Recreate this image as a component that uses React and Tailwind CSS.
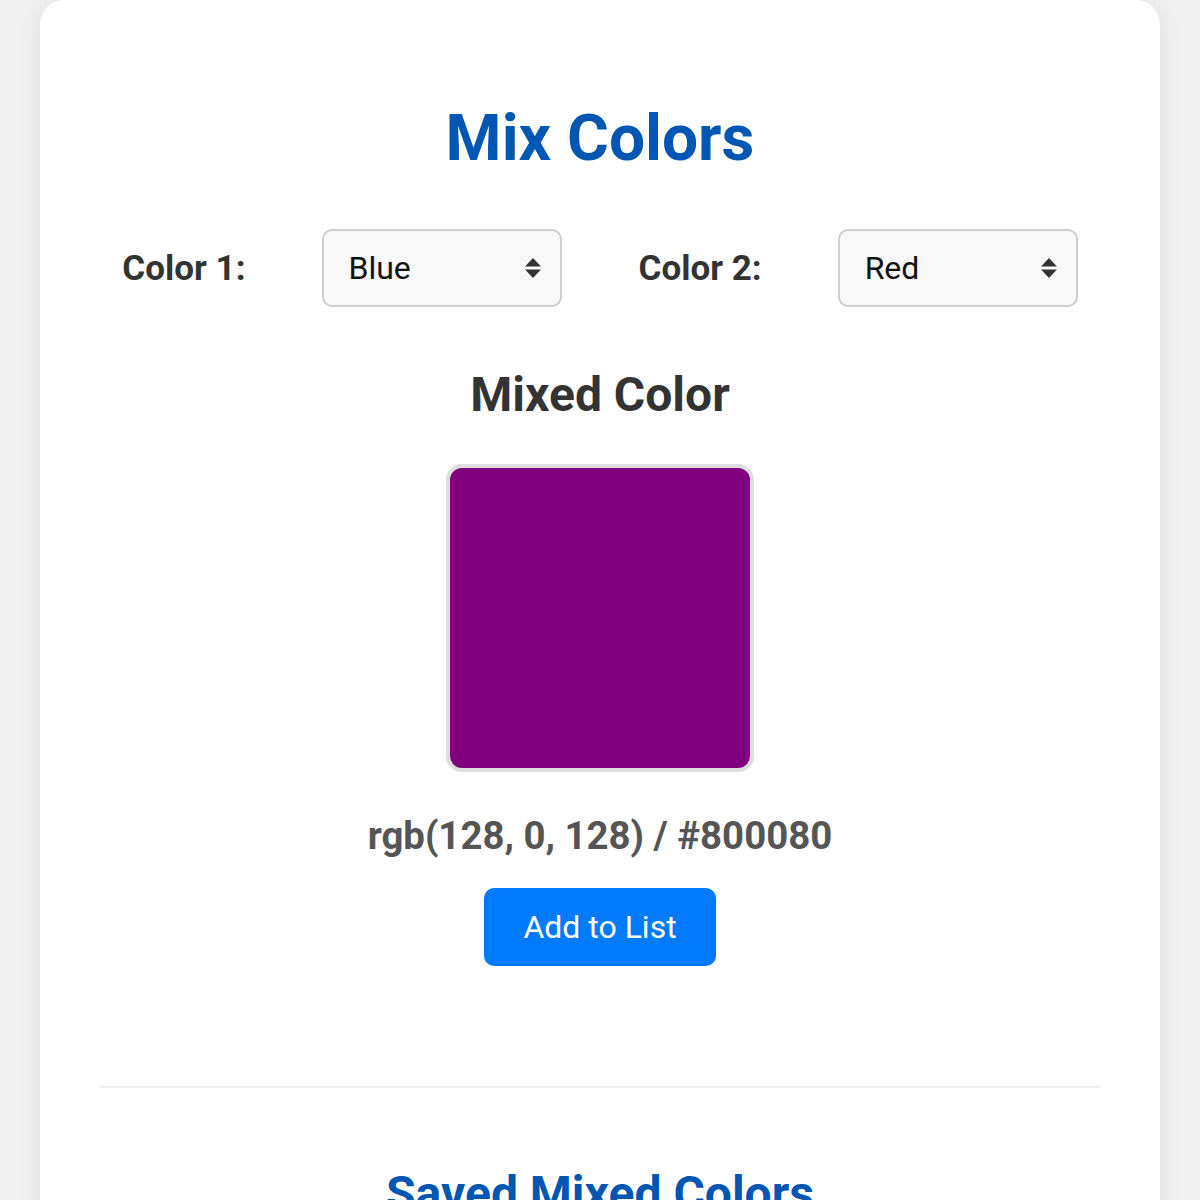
import React, { useState } from "react";

const COLORS = {
  Red: [255, 0, 0],
  Blue: [0, 0, 255],
  Yellow: [255, 255, 0],
  Green: [0, 128, 0],
  White: [255, 255, 255],
  Black: [0, 0, 0],
};

function mix(a, b) {
  return a.map((v, i) => Math.round((v + b[i]) / 2) === 128 ? 128 : Math.floor((v + b[i]) / 2));
}

function toHex(rgb) {
  return "#" + rgb.map((v) => v.toString(16).padStart(2, "0")).join("").toUpperCase();
}

function SortArrows() {
  return (
    <svg width="16" height="20" viewBox="0 0 16 20" className="pointer-events-none absolute right-[21px] top-1/2 -translate-y-1/2">
      <path d="M8 0 L16 8.5 L0 8.5 Z" fill="#333" />
      <path d="M0 11.5 L16 11.5 L8 20 Z" fill="#333" />
    </svg>
  );
}

function ColorSelect({ label, value, onChange }) {
  return (
    <div className="flex items-center gap-[76px]">
      <label className="text-[35px] font-bold leading-none text-[#333]">{label}</label>
      <div className="relative">
        <select
          value={value}
          onChange={(e) => onChange(e.target.value)}
          className="h-[78px] w-[240px] appearance-none rounded-[10px] border-2 border-[#cfcfcf] bg-[#f8f8f8] pl-[25px] pr-[48px] text-[32px] leading-none text-[#111] outline-none"
          style={{ fontFamily: "Roboto, sans-serif" }}
        >
          {Object.keys(COLORS).map((c) => (
            <option key={c} value={c}>
              {c}
            </option>
          ))}
        </select>
        <SortArrows />
      </div>
    </div>
  );
}

export default function App() {
  const [c1, setC1] = useState("Blue");
  const [c2, setC2] = useState("Red");
  const [saved, setSaved] = useState([]);

  const mixed = mix(COLORS[c1], COLORS[c2]);
  const rgbText = `rgb(${mixed.join(", ")})`;
  const hex = toHex(mixed);

  return (
    <div className="min-h-screen bg-[#f0f0f0] font-['Roboto',sans-serif]">
      <div className="mx-[40px] w-[1120px] rounded-[24px] bg-white px-[60px] pb-[80px] pt-[107px] shadow-[0_4px_24px_rgba(0,0,0,0.08)]">
        <h1 className="text-center text-[64px] font-bold leading-[64px] text-[#0056b3]">Mix Colors</h1>

        <div className="mt-[58px] flex items-center justify-center gap-[77px]">
          <ColorSelect label="Color 1:" value={c1} onChange={setC1} />
          <ColorSelect label="Color 2:" value={c2} onChange={setC2} />
        </div>

        <h2 className="mt-[64px] text-center text-[48px] font-bold leading-[48px] text-[#333]">Mixed Color</h2>

        <div className="mt-[45px] flex justify-center">
          <div
            className="h-[308px] w-[308px] rounded-[16px] border-4 border-[#dedede]"
            style={{ backgroundColor: rgbText }}
          />
        </div>

        <p className="mt-[45px] text-center text-[38.4px] font-bold leading-[38px] text-[#555]">
          {rgbText} / {hex}
        </p>

        <div className="mt-[33px] flex justify-center">
          <button
            onClick={() => setSaved([...saved, { rgb: rgbText, hex }])}
            className="h-[78px] w-[232px] rounded-[10px] bg-[#007bff] text-[32px] leading-none text-white"
          >
            Add to List
          </button>
        </div>

        <hr className="mt-[120px] border-0 border-t-2 border-[#eeeeee]" />

        <h2 className="mt-[82px] text-center text-[48px] font-bold leading-[48px] text-[#0056b3]">Saved Mixed Colors</h2>

        <ul className="mt-[40px] flex flex-col items-center gap-[16px]">
          {saved.map((s, i) => (
            <li key={i} className="flex items-center gap-[16px] text-[28px] text-[#333]">
              <span className="h-[40px] w-[40px] rounded-[8px]" style={{ backgroundColor: s.rgb }} />
              {s.rgb} / {s.hex}
            </li>
          ))}
        </ul>
      </div>
    </div>
  );
}
